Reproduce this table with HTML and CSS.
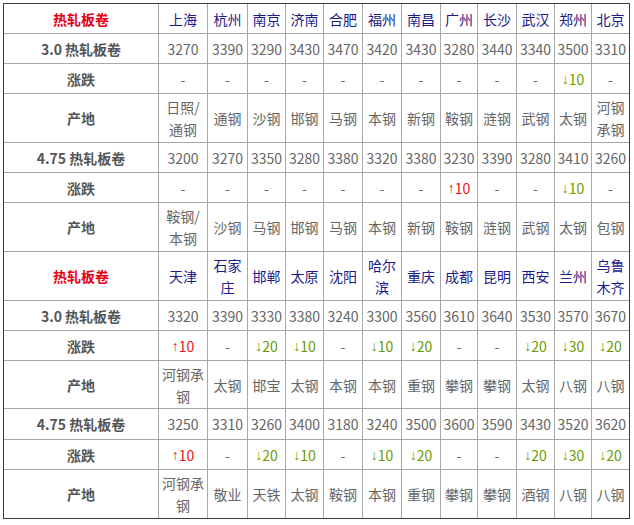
FILE: index.html
```html
<!DOCTYPE html>
<html lang="zh">
<head>
<meta charset="utf-8">
<title>热轧板卷</title>
<link rel="stylesheet" href="styles.css">
</head>
<body>
<div class="sheet">
  <div class="c hd">热轧板卷</div>
  <div class="c city">上海</div><div class="c city">杭州</div><div class="c city">南京</div><div class="c city">济南</div><div class="c city">合肥</div><div class="c city">福州</div><div class="c city">南昌</div><div class="c city">广州</div><div class="c city">长沙</div><div class="c city">武汉</div><div class="c city">郑州</div><div class="c city">北京</div>

  <div class="c lb">3.0 热轧板卷</div>
  <div class="c">3270</div><div class="c">3390</div><div class="c">3290</div><div class="c">3430</div><div class="c">3470</div><div class="c">3420</div><div class="c">3430</div><div class="c">3280</div><div class="c">3440</div><div class="c">3340</div><div class="c">3500</div><div class="c">3310</div>

  <div class="c lb">涨跌</div>
  <div class="c">-</div><div class="c">-</div><div class="c">-</div><div class="c">-</div><div class="c">-</div><div class="c">-</div><div class="c">-</div><div class="c">-</div><div class="c">-</div><div class="c">-</div><div class="c dn"><span class="ar">↓</span>10</div><div class="c">-</div>

  <div class="c lb">产地</div>
  <div class="c">日照/<br>通钢</div><div class="c">通钢</div><div class="c">沙钢</div><div class="c">邯钢</div><div class="c">马钢</div><div class="c">本钢</div><div class="c">新钢</div><div class="c">鞍钢</div><div class="c">涟钢</div><div class="c">武钢</div><div class="c">太钢</div><div class="c">河钢<br>承钢</div>

  <div class="c lb">4.75 热轧板卷</div>
  <div class="c">3200</div><div class="c">3270</div><div class="c">3350</div><div class="c">3280</div><div class="c">3380</div><div class="c">3320</div><div class="c">3380</div><div class="c">3230</div><div class="c">3390</div><div class="c">3280</div><div class="c">3410</div><div class="c">3260</div>

  <div class="c lb">涨跌</div>
  <div class="c">-</div><div class="c">-</div><div class="c">-</div><div class="c">-</div><div class="c">-</div><div class="c">-</div><div class="c">-</div><div class="c up"><span class="ar">↑</span>10</div><div class="c">-</div><div class="c">-</div><div class="c dn"><span class="ar">↓</span>10</div><div class="c">-</div>

  <div class="c lb">产地</div>
  <div class="c">鞍钢/<br>本钢</div><div class="c">沙钢</div><div class="c">马钢</div><div class="c">邯钢</div><div class="c">马钢</div><div class="c">本钢</div><div class="c">新钢</div><div class="c">鞍钢</div><div class="c">涟钢</div><div class="c">武钢</div><div class="c">太钢</div><div class="c">包钢</div>

  <div class="c hd">热轧板卷</div>
  <div class="c city">天津</div><div class="c city">石家<br>庄</div><div class="c city">邯郸</div><div class="c city">太原</div><div class="c city">沈阳</div><div class="c city">哈尔<br>滨</div><div class="c city">重庆</div><div class="c city">成都</div><div class="c city">昆明</div><div class="c city">西安</div><div class="c city">兰州</div><div class="c city">乌鲁<br>木齐</div>

  <div class="c lb">3.0 热轧板卷</div>
  <div class="c">3320</div><div class="c">3390</div><div class="c">3330</div><div class="c">3380</div><div class="c">3240</div><div class="c">3300</div><div class="c">3560</div><div class="c">3610</div><div class="c">3640</div><div class="c">3530</div><div class="c">3570</div><div class="c">3670</div>

  <div class="c lb">涨跌</div>
  <div class="c up"><span class="ar">↑</span>10</div><div class="c">-</div><div class="c dn"><span class="ar">↓</span>20</div><div class="c dn"><span class="ar">↓</span>10</div><div class="c">-</div><div class="c dn"><span class="ar">↓</span>10</div><div class="c dn"><span class="ar">↓</span>20</div><div class="c">-</div><div class="c">-</div><div class="c dn"><span class="ar">↓</span>20</div><div class="c dn"><span class="ar">↓</span>30</div><div class="c dn"><span class="ar">↓</span>20</div>

  <div class="c lb">产地</div>
  <div class="c">河钢承<br>钢</div><div class="c">太钢</div><div class="c">邯宝</div><div class="c">太钢</div><div class="c">本钢</div><div class="c">本钢</div><div class="c">重钢</div><div class="c">攀钢</div><div class="c">攀钢</div><div class="c">太钢</div><div class="c">八钢</div><div class="c">八钢</div>

  <div class="c lb">4.75 热轧板卷</div>
  <div class="c">3250</div><div class="c">3310</div><div class="c">3260</div><div class="c">3400</div><div class="c">3180</div><div class="c">3240</div><div class="c">3500</div><div class="c">3600</div><div class="c">3590</div><div class="c">3430</div><div class="c">3520</div><div class="c">3620</div>

  <div class="c lb">涨跌</div>
  <div class="c up"><span class="ar">↑</span>10</div><div class="c">-</div><div class="c dn"><span class="ar">↓</span>20</div><div class="c dn"><span class="ar">↓</span>10</div><div class="c">-</div><div class="c dn"><span class="ar">↓</span>10</div><div class="c dn"><span class="ar">↓</span>20</div><div class="c">-</div><div class="c">-</div><div class="c dn"><span class="ar">↓</span>20</div><div class="c dn"><span class="ar">↓</span>30</div><div class="c dn"><span class="ar">↓</span>20</div>

  <div class="c lb">产地</div>
  <div class="c">河钢承<br>钢</div><div class="c">敬业</div><div class="c">天铁</div><div class="c">太钢</div><div class="c">鞍钢</div><div class="c">本钢</div><div class="c">重钢</div><div class="c">攀钢</div><div class="c">攀钢</div><div class="c">酒钢</div><div class="c">八钢</div><div class="c">八钢</div>
</div>
</body>
</html>
```

FILE: styles.css
```css
html, body {
  margin: 0;
  padding: 0;
  background: #fff;
}
body {
  padding: 3px 0 0 3px;
  font-family: "Noto Sans CJK SC", "Noto Sans", sans-serif;
  font-size: 14px;
  color: #666;
}
.sheet {
  display: grid;
  width: 625px;
  grid-template-columns: 154px 48px 39px 37px 37px 38px 38px 38px 36px 38px 37px 36px 37px;
  grid-template-rows: 29px 29px 29px 48px 29px 29px 48px 48px 29px 29px 47px 30px 29px 48px;
  gap: 1px;
  background: #a8a8a8;
  border: 1px solid #3a3a3a;
}
.c {
  background: #fff;
  display: flex;
  align-items: center;
  justify-content: center;
  text-align: center;
  line-height: 22px;
  white-space: nowrap;
}
.hd {
  color: #e60012;
  font-weight: bold;
}
.city {
  color: #1a1a8c;
}
.lb {
  color: #555;
  font-weight: bold;
}
.up {
  color: #e8141c;
}
.dn {
  color: #6a9c00;
}
.ar {
  font-family: "Liberation Sans", sans-serif;
}
```
